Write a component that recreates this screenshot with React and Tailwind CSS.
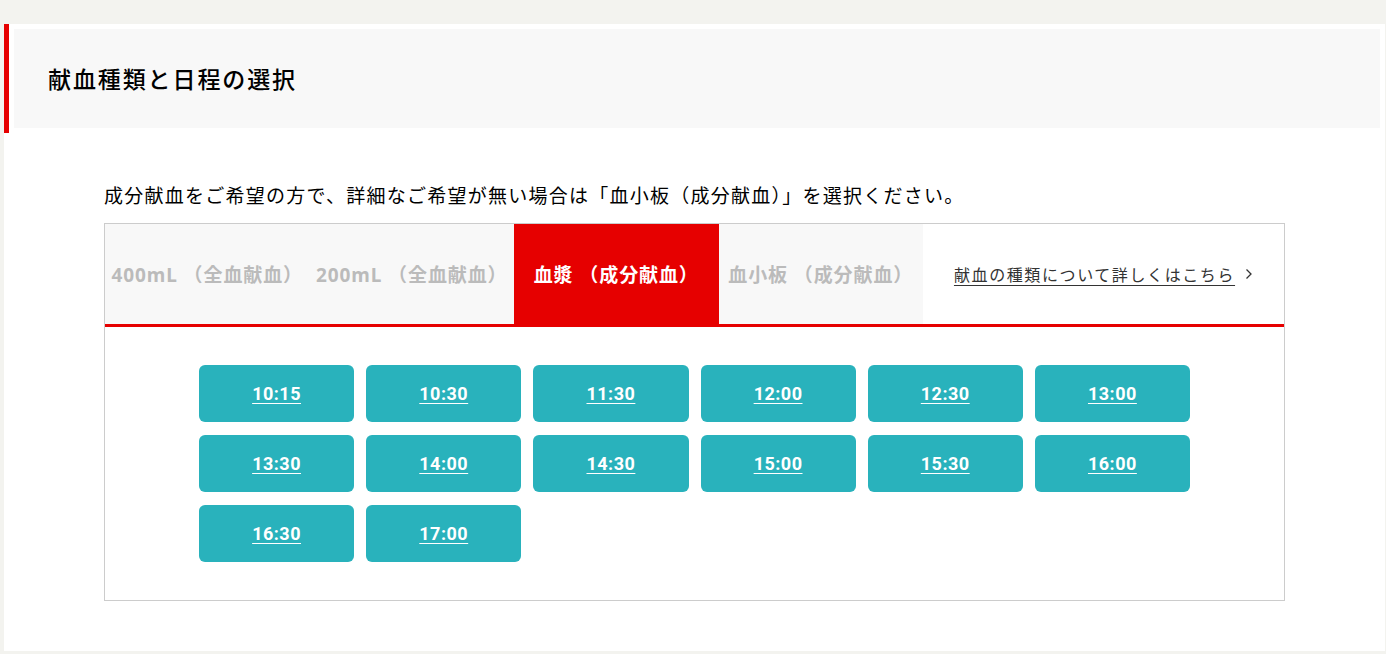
import React from "react";

const times = ["10:15","10:30","11:30","12:00","12:30","13:00","13:30","14:00","14:30","15:00","15:30","16:00","16:30","17:00"];
const tabs = [
  { label: "400mL （全血献血）", active: false },
  { label: "200mL （全血献血）", active: false },
  { label: "血漿 （成分献血）", active: true },
  { label: "血小板 （成分献血）", active: false },
];

export default function App() {
  return (
    <div className="min-h-[654px] bg-[#f3f3ef] pt-[24px] pl-[4px] pr-[1px] pb-[4px] font-['Noto_Sans','Noto_Sans_CJK_JP',sans-serif]">
      <div className="bg-white pb-[50px]">
        <div className="border-l-[5px] border-[#e60000] p-[5px] pl-[5px]">
          <div className="h-[99px] bg-[#f8f8f8] flex items-center pl-[34px]">
            <h1 className="text-[23px] tracking-[1.9px] font-medium text-black font-['Noto_Sans_CJK_JP',sans-serif]">献血種類と日程の選択</h1>
          </div>
        </div>
        <div className="px-[100px]">
          <p className="mt-[48px] mb-[14px] text-[19px] leading-[28px] tracking-[1.25px] text-black font-['Noto_Sans_CJK_JP',sans-serif]">
            成分献血をご希望の方で、詳細なご希望が無い場合は「血小板（成分献血）」を選択ください。
          </p>
          <div className="border border-[#cccccc]">
            <div className="flex h-[103px] border-b-[3px] border-[#e60000]">
              {tabs.map((t) => (
                <div
                  key={t.label}
                  className={
                    t.active
                      ? "w-[204.5px] flex items-center justify-center pt-[3px] bg-[#e60000] text-white font-bold text-[19px] tracking-[0.9px] font-['Noto_Sans','Noto_Sans_CJK_JP',sans-serif]"
                      : "w-[204.5px] flex items-center justify-center pt-[3px] bg-[#f8f8f8] text-[#bbbbbb] font-bold text-[19px] tracking-[0.9px] font-['Noto_Sans','Noto_Sans_CJK_JP',sans-serif]"
                  }
                >
                  {t.label}
                </div>
              ))}
              <div className="flex-1 flex items-center justify-center">
                <a className="text-[16px] tracking-[1.6px] text-[#333333] underline underline-offset-[4px] font-['Noto_Sans_CJK_JP',sans-serif]">献血の種類について詳しくはこちら</a>
                <svg className="ml-[10px]" width="8" height="12" viewBox="0 0 8 12" fill="none">
                  <path d="M1.5 1.5 L6 6 L1.5 10.5" stroke="#333" strokeWidth="1.3" />
                </svg>
              </div>
            </div>
            <div className="py-[38px]">
              <div className="w-[991px] mx-auto grid grid-cols-6 gap-x-[12px] gap-y-[13px]">
                {times.map((t) => (
                  <div key={t} className="h-[57px] rounded-[6px] bg-[#29b2bc] flex items-center justify-center">
                    <span className="text-white text-[18px] font-bold tracking-[0.5px] underline underline-offset-[3px] font-['Roboto',sans-serif]">{t}</span>
                  </div>
                ))}
              </div>
            </div>
          </div>
        </div>
      </div>
    </div>
  );
}
